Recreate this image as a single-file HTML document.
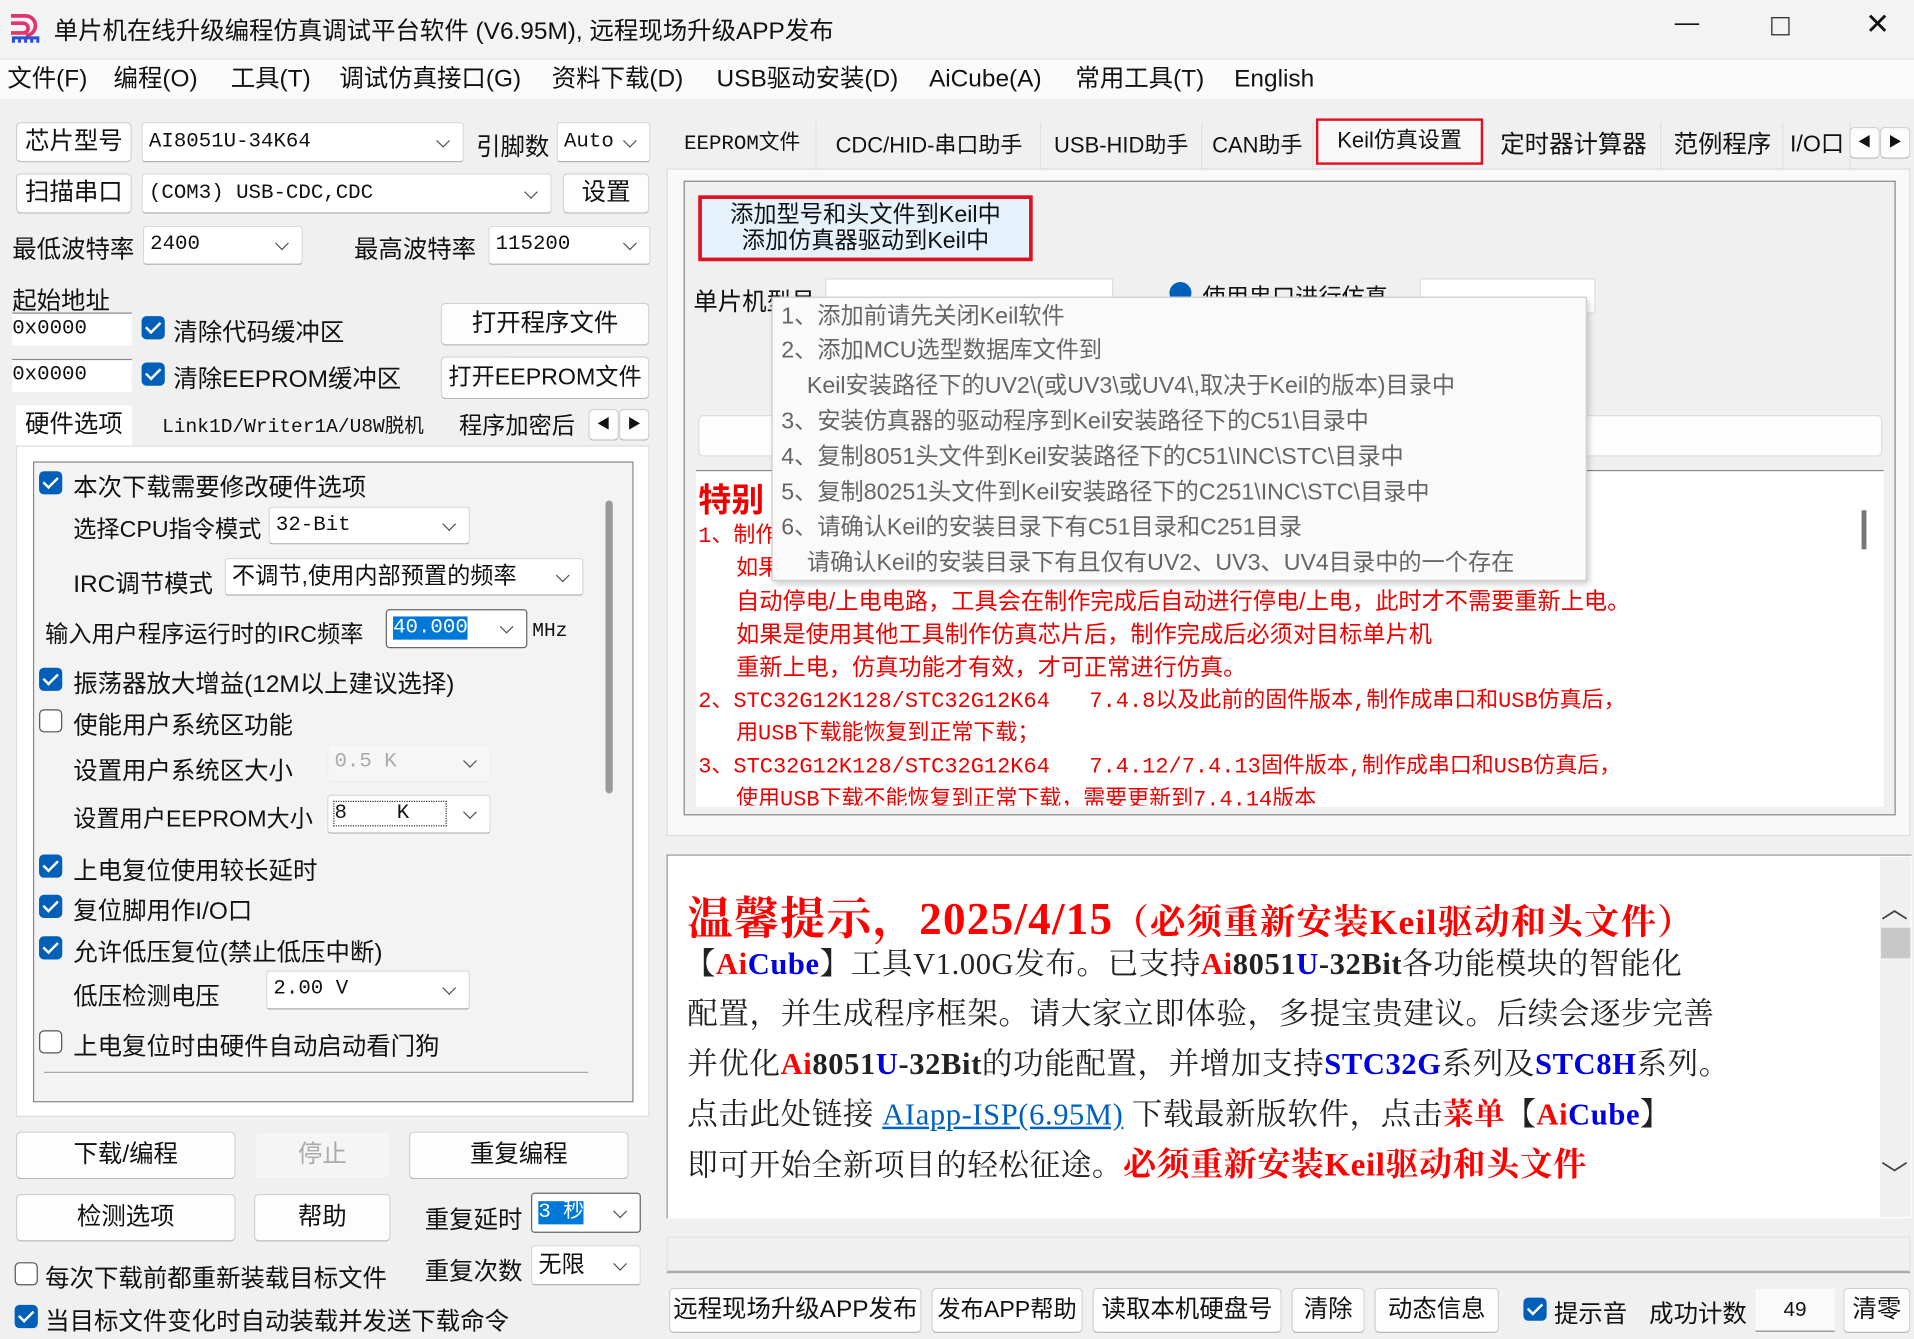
<!DOCTYPE html>
<html><head><meta charset="utf-8">
<style>
html,body{margin:0;padding:0;width:1914px;height:1339px;overflow:hidden;background:#f0f0f0}
#w{position:absolute;left:0;top:0;width:1568px;height:1097px;transform:scale(1.2207);transform-origin:0 0;font-family:"Liberation Sans","Noto Sans CJK SC",sans-serif;color:#111;font-size:19px}
.a{position:absolute;white-space:nowrap}
.mn{position:absolute;top:52px;font-size:20px;line-height:26px;height:26px}
.btn{position:absolute;background:#fdfdfd;border:1px solid #d0d0d0;border-bottom-color:#b8b8b8;border-radius:4px;text-align:center;box-sizing:border-box;white-space:nowrap}
.cmb{position:absolute;background:#fff;border:1px solid #d8d8d8;border-bottom-color:#aaa;border-radius:3px;box-sizing:border-box;padding-left:5px;white-space:nowrap;font-family:"Liberation Mono","Noto Sans CJK SC",monospace;font-size:17px}
.cmb:after{content:"";position:absolute;right:12px;top:50%;width:7px;height:7px;border-right:1.3px solid #555;border-bottom:1.3px solid #555;transform:translateY(-70%) rotate(45deg)}
.cb{position:absolute;width:19px;height:19px;border-radius:4px;background:#005fb8;box-sizing:border-box}
.cb:after{content:"";position:absolute;left:6px;top:2px;width:5px;height:10px;border-right:2px solid #fff;border-bottom:2px solid #fff;transform:rotate(45deg)}
.uc{position:absolute;width:19px;height:19px;border-radius:4px;border:1.3px solid #555;background:#fff;box-sizing:border-box}
.tab{position:absolute;top:100px;height:38px;line-height:38px;background:#f0f0f0;border-right:1px solid #e0e0e0;text-align:center;font-size:18px;white-space:nowrap}
.r{color:#f00}.b{color:#0000e0}
.red{position:absolute;color:#e00;font-family:"Liberation Mono","Noto Sans CJK SC",monospace;font-size:18px;white-space:nowrap}
.tip{position:absolute;left:640px;color:#666;font-size:19px;white-space:nowrap}
.m{position:absolute;left:563px;font-family:"Liberation Serif","Noto Serif CJK SC",serif;font-size:25px;white-space:nowrap;color:#222;letter-spacing:0.5px}
</style></head><body><div id="w">
<div class="a" style="left:0;top:0;width:1568px;height:48px;background:#f3f3f3"></div>
<svg class="a" style="left:7px;top:9px" width="28" height="28" viewBox="0 0 28 28"><path d="M2 4h12a8 8 0 0 1 0 16" stroke="#e2336b" stroke-width="3" fill="none"/><path d="M2 10h10a4 4 0 0 1 0 8H2" stroke="#e2336b" stroke-width="3" fill="none"/><path d="M4 26v-4h20v4M9 22v4M14 22v4M19 22v4" stroke="#2b4fd8" stroke-width="2.5" fill="none"/></svg>
<div class="a" style="left:44px;top:9px;font-size:20px">单片机在线升级编程仿真调试平台软件 (V6.95M), 远程现场升级APP发布</div>
<div class="a" style="left:1372px;top:8px;font-size:20px">—</div>
<div class="a" style="left:1451px;top:14px;width:13px;height:13px;border:1.3px solid #222"></div>
<div class="a" style="left:1528px;top:6px;font-size:24px">✕</div>
<div class="a" style="left:0;top:48px;width:1568px;height:32px;background:#fbfbfb;border-top:1px solid #e5e5e5"></div>
<div class="mn" style="left:6px">文件(F)</div>
<div class="mn" style="left:93px">编程(O)</div>
<div class="mn" style="left:189px">工具(T)</div>
<div class="mn" style="left:278px">调试仿真接口(G)</div>
<div class="mn" style="left:452px">资料下载(D)</div>
<div class="mn" style="left:587px">USB驱动安装(D)</div>
<div class="mn" style="left:761px">AiCube(A)</div>
<div class="mn" style="left:881px">常用工具(T)</div>
<div class="mn" style="left:1011px">English</div>

<div class="btn" style="left:13px;top:100px;width:95px;height:33px;line-height:31px;font-size:20px">芯片型号</div>
<div class="cmb" style="left:116px;top:100px;width:264px;height:33px;line-height:31px">AI8051U-34K64</div>
<div class="a" style="left:390px;top:104px;font-size:20px">引脚数</div>
<div class="cmb" style="left:456px;top:100px;width:77px;height:33px;line-height:31px">Auto</div>
<div class="btn" style="left:13px;top:142px;width:95px;height:33px;line-height:31px;font-size:20px">扫描串口</div>
<div class="cmb" style="left:116px;top:142px;width:336px;height:33px;line-height:31px">(COM3) USB-CDC,CDC</div>
<div class="btn" style="left:461px;top:142px;width:71px;height:33px;line-height:31px;font-size:20px">设置</div>
<div class="a" style="left:10px;top:188px;font-size:20px">最低波特率</div>
<div class="cmb" style="left:117px;top:185px;width:131px;height:32px;line-height:30px">2400</div>
<div class="a" style="left:290px;top:188px;font-size:20px">最高波特率</div>
<div class="cmb" style="left:400px;top:185px;width:133px;height:32px;line-height:30px">115200</div>
<div class="a" style="left:10px;top:230px;font-size:20px">起始地址</div>
<div class="a" style="left:10px;top:256px;width:98px;height:26px;background:#fff;border-top:1.5px solid #888;font-family:'Liberation Mono',monospace;font-size:17px;line-height:26px">0x0000</div>
<div class="cb" style="left:116px;top:259px"></div><div class="a" style="left:142px;top:256px;font-size:20px">清除代码缓冲区</div>
<div class="btn" style="left:361px;top:248px;width:171px;height:35px;line-height:33px;font-size:20px">打开程序文件</div>
<div class="a" style="left:10px;top:294px;width:98px;height:26px;background:#fff;border-top:1.5px solid #888;font-family:'Liberation Mono',monospace;font-size:17px;line-height:26px">0x0000</div>
<div class="cb" style="left:116px;top:297px"></div><div class="a" style="left:142px;top:294px;font-size:20px">清除EEPROM缓冲区</div>
<div class="btn" style="left:361px;top:292px;width:171px;height:35px;line-height:33px;font-size:19px">打开EEPROM文件</div>
<div class="a" style="left:13px;top:332px;width:95px;height:35px;background:#fff;text-align:center;line-height:33px;font-size:20px">硬件选项</div>
<div class="a" style="left:116px;top:336px;width:248px;line-height:28px;font-size:16px;text-align:center;font-family:'Liberation Mono','Noto Sans CJK SC',monospace">Link1D/Writer1A/U8W脱机</div>
<div class="a" style="left:376px;top:336px;width:106px;overflow:hidden;line-height:28px;font-size:19px">程序加密后</div>
<div class="btn" style="left:482px;top:335px;width:25px;height:26px;font-size:11px;line-height:24px">◀</div>
<div class="btn" style="left:507px;top:335px;width:25px;height:26px;font-size:11px;line-height:24px">▶</div>
<div class="a" style="left:13px;top:365px;width:519px;height:550px;background:#fff;border:1px solid #ddd;box-sizing:border-box"></div>
<div class="a" style="left:27px;top:378px;width:492px;height:525px;border:1.5px solid #888;box-sizing:border-box;background:#f3f3f3"></div>
<div class="a" style="left:496px;top:410px;width:6px;height:240px;background:#999;border-radius:3px"></div>
<div class="a" style="left:36px;top:878px;width:446px;height:1px;background:#aaa"></div>
<div class="cb" style="left:32px;top:386px"></div><div class="a" style="left:60px;top:383px;font-size:20px">本次下载需要修改硬件选项</div>
<div class="a" style="left:60px;top:419px;font-size:19px">选择CPU指令模式</div>
<div class="cmb" style="left:220px;top:415px;width:165px;height:31px;line-height:29px">32-Bit</div>
<div class="a" style="left:60px;top:462px;font-size:20px">IRC调节模式</div>
<div class="cmb" style="left:184px;top:457px;width:294px;height:31px;line-height:29px;font-size:19px;font-family:'Liberation Sans','Noto Sans CJK SC',sans-serif">不调节,使用内部预置的频率</div>
<div class="a" style="left:37px;top:505px;font-size:19px">输入用户程序运行时的IRC频率</div>
<div class="cmb" style="left:316px;top:499px;width:116px;height:32px;line-height:30px;border-color:#666"><span style="background:#0078d7;color:#fff">40.000</span></div>
<div class="a" style="left:436px;top:508px;font-size:16px;font-family:'Liberation Mono',monospace">MHz</div>
<div class="cb" style="left:32px;top:547px"></div><div class="a" style="left:60px;top:544px;font-size:20px">振荡器放大增益(12M以上建议选择)</div>
<div class="uc" style="left:32px;top:581px"></div><div class="a" style="left:60px;top:578px;font-size:20px">使能用户系统区功能</div>
<div class="a" style="left:60px;top:615px;font-size:20px">设置用户系统区大小</div>
<div class="cmb" style="left:268px;top:609px;width:134px;height:32px;line-height:30px;color:#aaa;background:#f6f6f6;border-color:#eee">0.5 K</div>
<div class="a" style="left:60px;top:656px;font-size:19px">设置用户EEPROM大小</div>
<div class="cmb" style="left:268px;top:651px;width:134px;height:32px;line-height:30px"><span style="outline:1px dotted #333;padding-right:30px">8&nbsp;&nbsp;&nbsp;&nbsp;K</span></div>
<div class="cb" style="left:32px;top:700px"></div><div class="a" style="left:60px;top:697px;font-size:20px">上电复位使用较长延时</div>
<div class="cb" style="left:32px;top:733px"></div><div class="a" style="left:60px;top:730px;font-size:20px">复位脚用作I/O口</div>
<div class="cb" style="left:32px;top:767px"></div><div class="a" style="left:60px;top:764px;font-size:20px">允许低压复位(禁止低压中断)</div>
<div class="a" style="left:60px;top:800px;font-size:20px">低压检测电压</div>
<div class="cmb" style="left:218px;top:795px;width:167px;height:32px;line-height:30px">2.00 V</div>
<div class="uc" style="left:32px;top:844px"></div><div class="a" style="left:60px;top:841px;font-size:20px">上电复位时由硬件自动启动看门狗</div>
<div class="btn" style="left:13px;top:927px;width:180px;height:39px;line-height:37px;font-size:20px">下载/编程</div>
<div class="btn" style="left:208px;top:927px;width:112px;height:39px;line-height:37px;font-size:20px;color:#aaa;background:#f5f5f5;border-color:#eee">停止</div>
<div class="btn" style="left:335px;top:927px;width:180px;height:39px;line-height:37px;font-size:20px">重复编程</div>
<div class="btn" style="left:13px;top:978px;width:180px;height:39px;line-height:37px;font-size:20px">检测选项</div>
<div class="btn" style="left:208px;top:978px;width:112px;height:39px;line-height:37px;font-size:20px">帮助</div>
<div class="a" style="left:348px;top:983px;font-size:20px">重复延时</div>
<div class="cmb" style="left:435px;top:977px;width:90px;height:33px;line-height:31px;border-color:#666"><span style="background:#0078d7;color:#fff">3 秒</span></div>
<div class="uc" style="left:12px;top:1034px"></div><div class="a" style="left:37px;top:1031px;font-size:20px">每次下载前都重新装载目标文件</div>
<div class="a" style="left:348px;top:1025px;font-size:20px">重复次数</div>
<div class="cmb" style="left:435px;top:1020px;width:90px;height:33px;line-height:31px;font-family:'Liberation Sans','Noto Sans CJK SC',sans-serif;font-size:19px">无限</div>
<div class="cb" style="left:12px;top:1069px"></div><div class="a" style="left:37px;top:1066px;font-size:20px">当目标文件变化时自动装载并发送下载命令</div>

<div class="tab" style="left:548px;width:120px;font-family:'Liberation Mono','Noto Sans CJK SC',monospace;font-size:17px">EEPROM文件</div>
<div class="tab" style="left:670px;width:182px">CDC/HID-串口助手</div>
<div class="tab" style="left:853px;width:131px">USB-HID助手</div>
<div class="tab" style="left:985px;width:90px">CAN助手</div>
<div class="tab" style="left:1078px;top:97px;width:137px;height:38px;background:#f9f9f9;border:2.5px solid #e01020;box-sizing:border-box;line-height:33px">Keil仿真设置</div>
<div class="tab" style="left:1218px;width:142px;font-size:20px">定时器计算器</div>
<div class="tab" style="left:1362px;width:98px;font-size:20px">范例程序</div>
<div class="tab" style="left:1462px;width:53px;overflow:hidden;font-size:19px">I/O口</div>
<div class="btn" style="left:1515px;top:104px;width:25px;height:26px;font-size:11px;line-height:24px">◀</div>
<div class="btn" style="left:1540px;top:104px;width:25px;height:26px;font-size:11px;line-height:24px">▶</div>
<div class="a" style="left:546px;top:138px;width:1019px;height:547px;background:#f9f9f9;border:1px solid #ddd;box-sizing:border-box"></div>
<div class="a" style="left:560px;top:148px;width:993px;height:520px;border:1.5px solid #888;box-sizing:border-box;background:#f0f0f0"></div>
<div class="a" style="left:572px;top:160px;width:274px;height:54px;background:#e5f1fb;border:3px solid #e01020;box-sizing:border-box;text-align:center;font-size:19px;line-height:21px;padding-top:3px">添加型号和头文件到Keil中<br>添加仿真器驱动到Keil中</div>
<div class="a" style="left:568px;top:231px;font-size:20px">单片机型号</div>
<div class="a" style="left:676px;top:228px;width:234px;height:27px;background:#fff;border:1px solid #ddd"></div>
<div class="a" style="left:958px;top:231px;width:18px;height:18px;border-radius:50%;background:#005fb8"></div>
<div class="a" style="left:985px;top:229px;font-size:19px">使用串口进行仿真</div>
<div class="a" style="left:1163px;top:228px;width:142px;height:27px;background:#fff;border:1px solid #ddd"></div>
<div class="a" style="left:572px;top:340px;width:968px;height:32px;background:#fdfdfd;border:1px solid #ddd;border-radius:4px"></div>
<div class="a" style="left:570px;top:385px;width:973px;height:275px;background:#fff;border-top:1.5px solid #888"></div>
<div class="a" style="left:1525px;top:418px;width:4px;height:32px;background:#777"></div>
<div class="a" style="left:572px;top:388px;color:#e00;font-size:27px;font-weight:bold">特别</div>
<div class="red" style="left:572px;top:424px">1、制作</div>
<div class="red" style="left:603px;top:451px">如果</div>
<div class="red" style="left:603px;top:478px;font-family:'Liberation Sans','Noto Sans CJK SC',sans-serif;font-size:19px">自动停电/上电电路，工具会在制作完成后自动进行停电/上电，此时才不需要重新上电。</div>
<div class="red" style="left:603px;top:505px;font-family:'Liberation Sans','Noto Sans CJK SC',sans-serif;font-size:19px">如果是使用其他工具制作仿真芯片后，制作完成后必须对目标单片机</div>
<div class="red" style="left:603px;top:532px;font-family:'Liberation Sans','Noto Sans CJK SC',sans-serif;font-size:19px">重新上电，仿真功能才有效，才可正常进行仿真。</div>
<div class="red" style="left:572px;top:559px">2、STC32G12K128/STC32G12K64&nbsp;&nbsp;&nbsp;7.4.8以及此前的固件版本,制作成串口和USB仿真后，</div>
<div class="red" style="left:603px;top:586px">用USB下载能恢复到正常下载；</div>
<div class="red" style="left:572px;top:613px">3、STC32G12K128/STC32G12K64&nbsp;&nbsp;&nbsp;7.4.12/7.4.13固件版本,制作成串口和USB仿真后，</div>
<div class="a" style="left:570px;top:640px;width:950px;height:20px;overflow:hidden"><div class="red" style="left:33px;top:0">使用USB下载不能恢复到正常下载，需要更新到7.4.14版本</div></div>
<div class="a" style="left:632px;top:243px;width:666px;height:231px;background:#fafafa;border:1px solid #ccc;box-shadow:2px 3px 5px rgba(0,0,0,.2)"></div>
<div class="tip" style="top:244px">1、添加前请先关闭Keil软件</div>
<div class="tip" style="top:272px">2、添加MCU选型数据库文件到</div>
<div class="tip" style="top:301px;left:661px">Keil安装路径下的UV2\(或UV3\或UV4\,取决于Keil的版本)目录中</div>
<div class="tip" style="top:330px">3、安装仿真器的驱动程序到Keil安装路径下的C51\目录中</div>
<div class="tip" style="top:359px">4、复制8051头文件到Keil安装路径下的C51\INC\STC\目录中</div>
<div class="tip" style="top:388px">5、复制80251头文件到Keil安装路径下的C251\INC\STC\目录中</div>
<div class="tip" style="top:417px">6、请确认Keil的安装目录下有C51目录和C251目录</div>
<div class="tip" style="top:446px;left:661px">请确认Keil的安装目录下有且仅有UV2、UV3、UV4目录中的一个存在</div>

<div class="a" style="left:546px;top:700px;width:1019px;height:297px;background:#fff;border-top:1.5px solid #999;border-left:1.5px solid #999"></div>
<div class="a" style="left:1540px;top:702px;width:25px;height:295px;background:#f0f0f0"></div>
<div class="a" style="left:1541px;top:727px;font-size:22px;color:#444">︿</div>
<div class="a" style="left:1541px;top:760px;width:24px;height:25px;background:#c8c8c8"></div>
<div class="a" style="left:1541px;top:945px;font-size:22px;color:#444">﹀</div>
<div class="a" style="left:563px;top:722px;color:#f00;font-weight:bold;font-family:'Liberation Serif','Noto Serif CJK SC',serif;font-size:37px;letter-spacing:1px">温馨提示，2025/4/15<span style="font-size:29px">（必须重新安装Keil驱动和头文件）</span></div>
<div class="m" style="top:770px;left:561px">【<b class="r">Ai</b><b class="b">Cube</b>】工具V1.00G发布。已支持<b class="r">Ai</b><b>8051</b><b class="b">U</b><b>-32Bit</b>各功能模块的智能化</div>
<div class="m" style="top:811px">配置，并生成程序框架。请大家立即体验，多提宝贵建议。后续会逐步完善</div>
<div class="m" style="top:852px">并优化<b class="r">Ai</b><b>8051</b><b class="b">U</b><b>-32Bit</b>的功能配置，并增加支持<b class="b">STC32G</b>系列及<b class="b">STC8H</b>系列。</div>
<div class="m" style="top:893px">点击此处链接 <span style="color:#0060c0;text-decoration:underline">AIapp-ISP(6.95M)</span> 下载最新版软件，点击<b class="r">菜单</b><b>【</b><b class="r">Ai</b><b class="b">Cube</b><b>】</b></div>
<div class="m" style="top:932px">即可开始全新项目的轻松征途。<b class="r" style="font-size:27px">必须重新安装Keil驱动和头文件</b></div>
<div class="a" style="left:546px;top:1013px;width:1019px;height:30px;background:#f0f0f0;border:1px solid #e2e2e2;border-bottom:2px solid #aaa;box-sizing:border-box"></div>
<div class="btn" style="left:548px;top:1055px;width:207px;height:37px;line-height:35px;font-size:20px">远程现场升级APP发布</div>
<div class="btn" style="left:763px;top:1055px;width:124px;height:37px;line-height:35px;font-size:19px">发布APP帮助</div>
<div class="btn" style="left:895px;top:1055px;width:155px;height:37px;line-height:35px;font-size:20px">读取本机硬盘号</div>
<div class="btn" style="left:1058px;top:1055px;width:60px;height:37px;line-height:35px;font-size:20px">清除</div>
<div class="btn" style="left:1126px;top:1055px;width:102px;height:37px;line-height:35px;font-size:20px">动态信息</div>
<div class="cb" style="left:1248px;top:1063px"></div><div class="a" style="left:1273px;top:1060px;font-size:20px">提示音</div>
<div class="a" style="left:1351px;top:1060px;font-size:20px">成功计数</div>
<div class="a" style="left:1438px;top:1056px;width:65px;height:34px;background:#fafafa;border-bottom:1.5px solid #888;text-align:center;line-height:34px;font-size:17px">49</div>
<div class="btn" style="left:1510px;top:1055px;width:55px;height:37px;line-height:35px;font-size:20px">清零</div>
</div></body></html>
